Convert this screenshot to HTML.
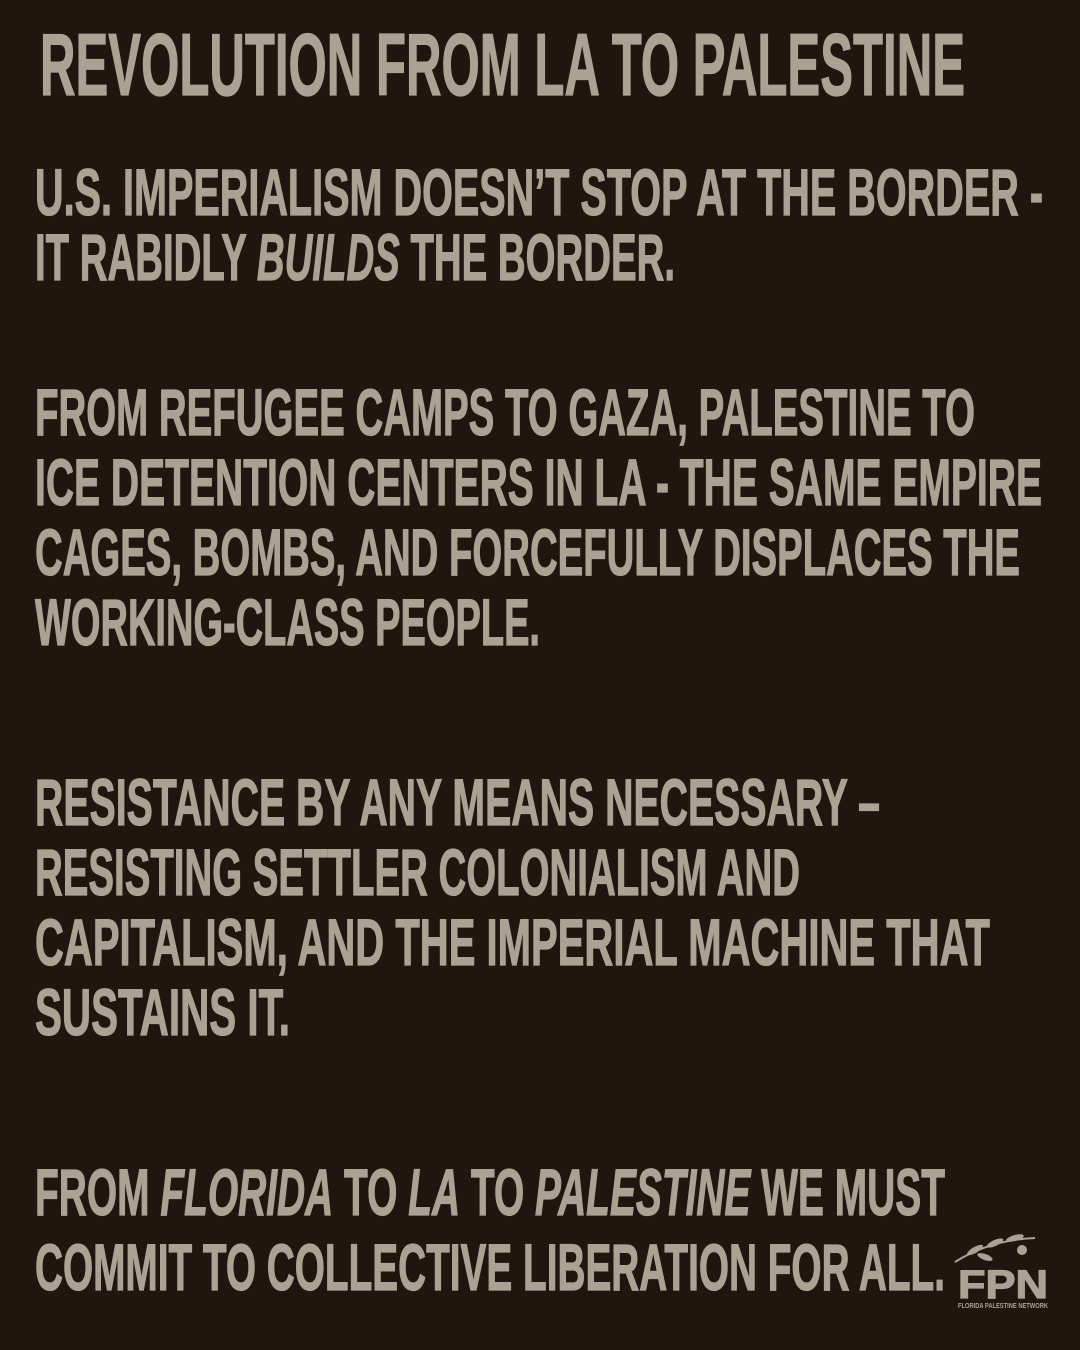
<!DOCTYPE html>
<html><head><meta charset="utf-8"><style>
html,body{margin:0;padding:0;background:#1e160f;}
svg{display:block}
text{font-family:"Liberation Sans Narrow","Liberation Sans",sans-serif;font-weight:bold;fill:#aaa292;stroke:#aaa292;stroke-width:1.2;}
</style></head><body>
<svg width="1080" height="1350" viewBox="0 0 1080 1350" xmlns="http://www.w3.org/2000/svg">
<rect width="1080" height="1350" fill="#1e160f"/>
<text x="40" y="95" font-size="88" textLength="925" lengthAdjust="spacingAndGlyphs">REVOLUTION FROM LA TO PALESTINE</text>
<g font-size="66">
<text x="35" y="215" textLength="1008" lengthAdjust="spacingAndGlyphs">U.S. IMPERIALISM DOESN’T STOP AT THE BORDER -</text>
<text x="35" y="280" textLength="640" lengthAdjust="spacingAndGlyphs">IT RABIDLY <tspan font-style="italic">BUILDS</tspan> THE BORDER.</text>
<text x="35" y="435" textLength="940" lengthAdjust="spacingAndGlyphs">FROM REFUGEE CAMPS TO GAZA, PALESTINE TO</text>
<text x="35" y="505" textLength="1007" lengthAdjust="spacingAndGlyphs">ICE DETENTION CENTERS IN LA - THE SAME EMPIRE</text>
<text x="35" y="575" textLength="985" lengthAdjust="spacingAndGlyphs">CAGES, BOMBS, AND FORCEFULLY DISPLACES THE</text>
<text x="35" y="645" textLength="505" lengthAdjust="spacingAndGlyphs">WORKING-CLASS PEOPLE.</text>
<text x="35" y="825" textLength="845" lengthAdjust="spacingAndGlyphs">RESISTANCE BY ANY MEANS NECESSARY –</text>
<text x="35" y="895" textLength="765" lengthAdjust="spacingAndGlyphs">RESISTING SETTLER COLONIALISM AND</text>
<text x="35" y="965" textLength="955" lengthAdjust="spacingAndGlyphs">CAPITALISM, AND THE IMPERIAL MACHINE THAT</text>
<text x="35" y="1035" textLength="255" lengthAdjust="spacingAndGlyphs">SUSTAINS IT.</text>
<text x="35" y="1215" textLength="910" lengthAdjust="spacingAndGlyphs">FROM <tspan font-style="italic">FLORIDA</tspan> TO <tspan font-style="italic">LA</tspan> TO <tspan font-style="italic">PALESTINE</tspan> WE MUST</text>
<text x="35" y="1290" textLength="910" lengthAdjust="spacingAndGlyphs">COMMIT TO COLLECTIVE LIBERATION FOR ALL.</text>
</g>
<g fill="#aaa292">
<path d="M955 1262 Q990 1240 1035 1238" stroke="#aaa292" stroke-width="2" fill="none"/>
<ellipse cx="975" cy="1250" rx="9" ry="3" transform="rotate(-30 975 1250)"/>
<ellipse cx="995" cy="1243" rx="9" ry="3" transform="rotate(-25 995 1243)"/>
<ellipse cx="1015" cy="1238" rx="9" ry="3" transform="rotate(-15 1015 1238)"/>
<ellipse cx="985" cy="1257" rx="8" ry="3" transform="rotate(20 985 1257)"/>
<circle cx="1022" cy="1250" r="5"/>
</g>
<text x="958" y="1298" font-size="40" textLength="90" lengthAdjust="spacingAndGlyphs">FPN</text>
<text x="958" y="1308" font-size="7" style="stroke-width:0" textLength="90" lengthAdjust="spacingAndGlyphs">FLORIDA PALESTINE NETWORK</text>
</svg>
</body></html>
